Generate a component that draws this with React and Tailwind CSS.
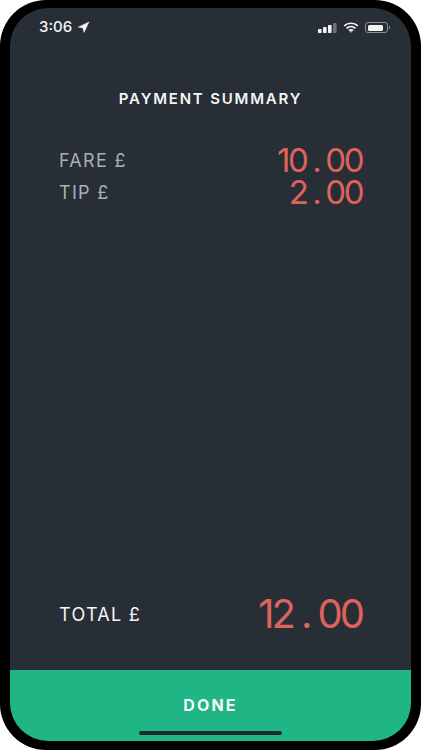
import { Navigation } from 'lucide-react'

const sans = "font-['Inter','Liberation_Sans',sans-serif]"

function Senales() {
  return (
    <div className="flex items-center gap-[6px]">
      <svg width="19" height="10" viewBox="0 0 19 10" fill="#f2f3f3">
        <rect x="0" y="6" width="3.6" height="4" rx="0.7" />
        <rect x="5" y="4" width="3.6" height="6" rx="0.7" />
        <rect x="10" y="2" width="3.6" height="8" rx="0.7" />
        <rect x="15" y="0" width="3.6" height="10" rx="0.7" fill="#6d7276" />
      </svg>
      <svg width="16" height="11" viewBox="0 0 17 12" fill="none" stroke="#f2f3f3" strokeWidth="1.8" strokeLinecap="butt">
        <path d="M1 4.2C5.2 .4 11.8 .4 16 4.2" />
        <path d="M3.6 6.9c2.8-2.4 7-2.4 9.8 0" />
        <path d="M6.2 9.4c1.3-1 3.3-1 4.6 0" />
        <circle cx="8.5" cy="10.6" r="0.9" fill="#f2f3f3" stroke="none" />
      </svg>
      <div className="flex items-center">
        <div className="h-[11px] w-[23px] rounded-[3px] border border-[#8b8f92] p-[1.5px]">
          <div className="h-full w-[15px] rounded-[1.5px] bg-[#f2f3f3]" />
        </div>
        <div className="ml-[1px] h-[3px] w-[1px] bg-[#8b8f92]" />
      </div>
    </div>
  )
}

// El importe va como texto normal; el punto ocupa casi una cifra entera, como en el display
function Importe({ entero, decimales, className, puntoClass }) {
  return (
    <span className={`mb-[3px] text-[#dd635c] ${className}`}>
      {entero}<span className={puntoClass}>.</span>{decimales}
    </span>
  )
}

export default function App() {
  return (
    <div className={`h-[750px] w-[422px] overflow-hidden bg-white ${sans}`}>
      <div className="h-[750px] w-[421px] rounded-[46px] bg-black pb-[9px] pl-[10px] pr-[10px] pt-[8px]">
        <div className="flex h-full flex-col overflow-hidden rounded-[38px] bg-[#272e36]">
          <div className="flex h-[38px] items-center justify-between pl-[29px] pr-[21px] pt-[1px]">
            <div className="flex items-center gap-[5px] text-[15px] font-medium text-[#f2f3f3]">
              3:06
              <Navigation size={13} fill="#f2f3f3" strokeWidth={1} />
            </div>
            <Senales />
          </div>

          <h1 className="mt-[43px] text-center text-[15px] font-semibold leading-[20px] tracking-[1.8px] text-[#f4f5f5]">PAYMENT SUMMARY</h1>

          <div className="mt-[36px] flex flex-col px-[49px] text-[18px] leading-none tracking-[1.3px] text-[#a9afb3]">
            <div className="flex h-[32px] items-center justify-between">
              <span>FARE £</span>
              <Importe entero="10" decimales="00" className="text-[33px] leading-[24px] tracking-[-2.5px]" puntoClass="mx-[6px]" />
            </div>
            <div className="flex h-[32px] items-center justify-between">
              <span>TIP £</span>
              <Importe entero="2" decimales="00" className="text-[33px] leading-[24px] tracking-[-2.5px]" puntoClass="mx-[6px]" />
            </div>
          </div>

          <div className="mt-auto flex h-[32px] items-center justify-between px-[49px] mb-[39px] text-[18px] leading-none tracking-[1.3px] text-[#f4f5f5]">
            <span>TOTAL £</span>
            <Importe entero="12" decimales="00" className="text-[40px] leading-[30px] tracking-[-3px]" puntoClass="mx-[8px]" />
          </div>

          <div className="flex h-[71px] flex-col items-center bg-[#1fb584]">
            <span className="mt-[26px] text-[16px] font-bold leading-[18px] tracking-[2.2px] text-[#f4fbf8]">DONE</span>
            <div className="mt-auto mb-[6px] h-[4px] w-[143px] rounded-full bg-[#1b2a2c]" />
          </div>
        </div>
      </div>
    </div>
  )
}
